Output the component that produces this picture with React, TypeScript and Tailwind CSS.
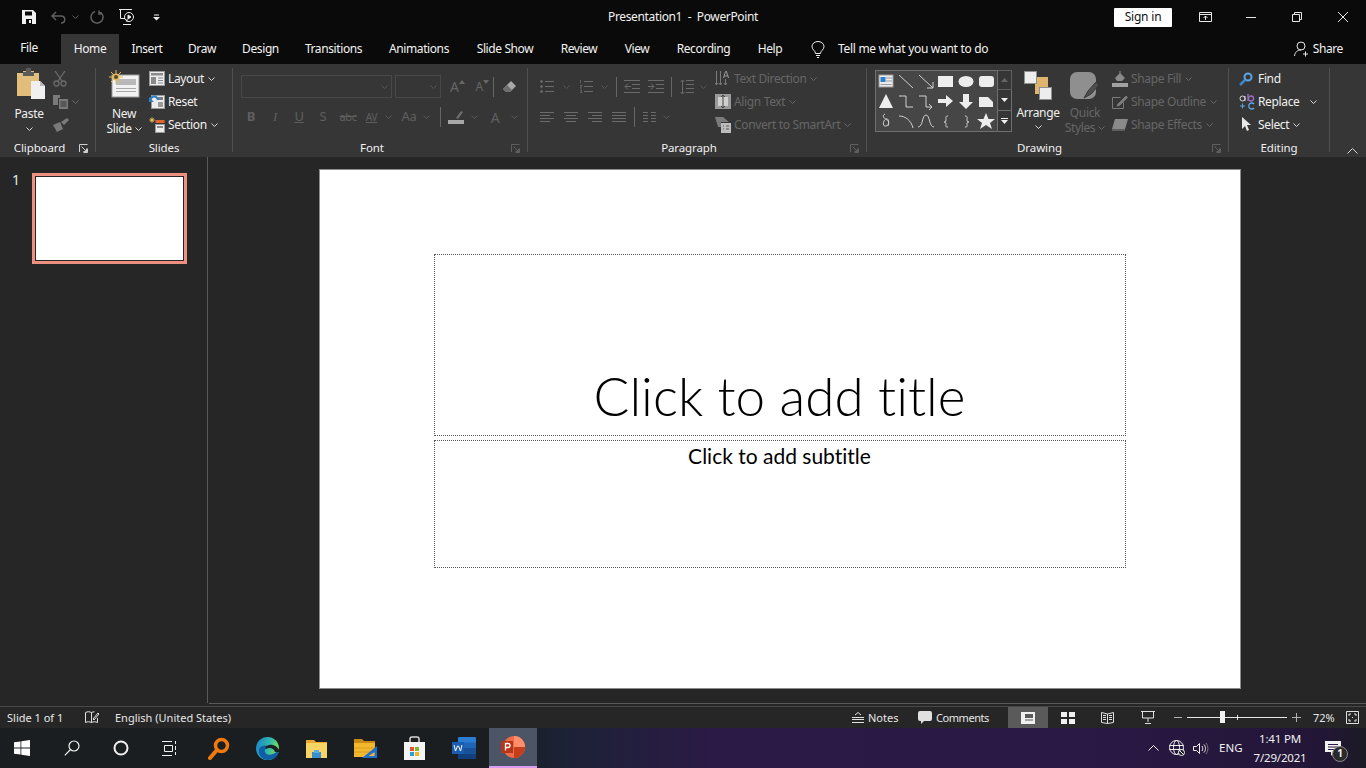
const dim = '#6b6b6b';

function Chev({ c = '#d8d8d8', className = '' }: { c?: string; className?: string }) {
  return (
    <svg width="7" height="4" viewBox="0 0 7 4" className={className} fill="none" stroke={c}>
      <path d="M.5.5 3.5 3.5 6.5.5" />
    </svg>
  );
}

function Launcher({ c = '#bdbdbd' }: { c?: string }) {
  return (
    <svg width="9" height="9" viewBox="0 0 9 9" fill="none" stroke={c}>
      <path d="M.5 8V.5H8.5M8.5 4.5V8.5H4.5M2.5 2.5 7.5 7.5M7.5 4.5V7.5H4.5" />
    </svg>
  );
}

function Label({ text, launcher, c }: { text: string; launcher?: boolean; c?: string }) {
  return (
    <div className="flex h-[16px] items-center">
      <div className="flex-1 text-center text-[11.5px] leading-[16px] tracking-[-0.1px] text-[#f0f0f0]">{text}</div>
      {launcher && (
        <div className="flex w-[16px] items-center justify-start">
          <Launcher c={c} />
        </div>
      )}
    </div>
  );
}

function Group({ className, children }: { className: string; children: React.ReactNode }) {
  return (
    <div className={'flex ' + className}>
      <div className="flex min-w-0 flex-1 flex-col">{children}</div>
      <div className="mt-[1px] h-[84px] w-px bg-[#505050]" />
    </div>
  );
}

function SmallRow({ icon, text, disabled, chev }: { icon: React.ReactNode; text: string; disabled?: boolean; chev?: boolean }) {
  return (
    <div className="flex h-[23px] items-center">
      <div className="flex w-[16px] justify-center">{icon}</div>
      <span className={'ml-[3px] text-[12px] ' + (disabled ? 'text-[#666666]' : 'text-[#f0f0f0]')}>{text}</span>
      {chev && <Chev c={disabled ? '#666666' : '#d8d8d8'} className="ml-[4px]" />}
    </div>
  );
}

function Lines({ w = 14, kind }: { w?: number; kind: 'left' | 'center' | 'right' | 'just' }) {
  const rows = [
    { left: [0, 14], center: [0, 14], right: [0, 14], just: [0, 14] },
    { left: [0, 10], center: [2, 12], right: [4, 14], just: [0, 14] },
    { left: [0, 14], center: [0, 14], right: [0, 14], just: [0, 14] },
    { left: [0, 10], center: [2, 12], right: [4, 14], just: [0, 14] },
  ];
  return (
    <svg width={w} height="12" viewBox="0 0 14 12" stroke={dim}>
      {rows.map((r, i) => (
        <path key={i} d={`M${r[kind][0]} ${1.5 + i * 3}H${r[kind][1]}`} />
      ))}
    </svg>
  );
}

function Clipboard() {
  return (
    <svg width="28" height="31" viewBox="0 0 28 31">
      <path d="M0 5h6V3h11v2h5v23H0z" fill="#e2bd7c" />
      <path d="M6 4h3V0h5v4h3v4H6z" fill="#5a5a5a" />
      <path d="M14 13h9l5 5v13H14z" fill="#f0f0f0" />
      <path d="M23 13v5h5" fill="#bbbbbb" />
    </svg>
  );
}

function NewSlideIcon() {
  return (
    <svg width="31" height="28" viewBox="0 0 31 28">
      <rect x="3" y="5" width="27" height="22" fill="#f2f2f2" stroke="#9c9c9c" />
      <rect x="7" y="9" width="20" height="6" fill="#b9b9b9" />
      <path d="M7 18.5h20M7 21.5h20" stroke="#a8a8a8" />
      <circle cx="7" cy="7" r="3.5" fill="#e4b95b" />
      <path d="M7 0v14M0 7h14M2 2l10 10M12 2 2 12" stroke="#e4b95b" />
      <circle cx="7" cy="7" r="2" fill="#5a4a22" />
    </svg>
  );
}

function LayoutIcon() {
  return (
    <svg width="16" height="15" viewBox="0 0 16 15">
      <rect x=".5" y=".5" width="15" height="14" fill="#ececec" stroke="#9a9a9a" />
      <rect x="2" y="2" width="12" height="2.5" fill="#8a8a8a" />
      <rect x="2" y="6" width="5" height="7" fill="#8a8a8a" />
      <path d="M9 7h5M9 9.5h5M9 12h5" stroke="#8a8a8a" />
    </svg>
  );
}

function ResetIcon() {
  return (
    <svg width="16" height="15" viewBox="0 0 16 15">
      <rect x="2.5" y="1.5" width="13" height="13" fill="#ececec" stroke="#9a9a9a" />
      <rect x="9" y="3" width="5" height="3" fill="#7d7d7d" />
      <rect x="9" y="8" width="5" height="5" fill="#9a9a9a" />
      <path d="M1.5 5.5C3 1.5 8 1.5 9 6" fill="none" stroke="#2f7fc4" strokeWidth="2" />
      <path d="M0 3v5h5z" fill="#2f7fc4" />
    </svg>
  );
}

function SectionIcon() {
  return (
    <svg width="16" height="16" viewBox="0 0 16 16">
      <rect x="6.5" y="3" width="9" height="3" fill="#e2672f" />
      <rect x="6.5" y="7.5" width="9" height="8" fill="#ececec" stroke="#9a9a9a" />
      <rect x="8" y="9" width="6" height="2" fill="#8a8a8a" />
      <circle cx="3" cy="3" r="1.6" fill="#e4b95b" />
      <path d="M3 0v6M0 3h6M1 1l4 4M5 1 1 5" stroke="#e4b95b" strokeWidth=".7" />
    </svg>
  );
}

function Shape({ n }: { n: number }) {
  const s = { fill: 'none', stroke: '#d0d0d0' };
  const f = '#ededed';
  const items: React.ReactNode[] = [
    <g>
      <rect x="3" y="4" width="14" height="12" fill="#ececec" stroke="#9a9a9a" />
      <rect x="4.500" y="6" width="5" height="5" fill="#2f7fd0" />
      <path d="M10 7h6M10 10h6M4.500 13.500h11" stroke="#9a9a9a" />
    </g>,
    <path d="M3 4 17 17" {...s} />,
    <path d="M3 4 17 17M11 17h6v-6" {...s} />,
    <rect x="2" y="5" width="15" height="11" fill={f} />,
    <ellipse cx="9" cy="10.500" rx="7.500" ry="5.500" fill={f} />,
    <rect x="2" y="5" width="15" height="11" rx="3" fill={f} />,
    <path d="M10 3 17 17H3z" fill={f} />,
    <path d="M3 5h7v11h7" {...s} />,
    <path d="M3 5h7v11h5M13 13l3 3-3 3" {...s} />,
    <path d="M2 8h8V4l7 6-7 6v-4H2z" fill={f} />,
    <path d="M6 3h6v8h4l-7 7-7-7h4z" fill={f} />,
    <path d="M2 6h9l5 5v5H2z" fill={f} />,
    <path d="M9 3c-4 2 0 5 2 6s3 5-1 6-3-6 0-7 3 3 2 7" {...s} />,
    <path d="M3 5c6 0 12 4 14 12" {...s} />,
    <path d="M2 16C7 16 6 4 10 4s3 12 8 12" {...s} />,
    <path d="M12 5c-3 0-2 2-2 4s-1 2-2 2c1 0 2 0 2 2s-1 3 2 3" {...s} />,
    <path d="M8 5c3 0 2 2 2 4s1 2 2 2c-1 0-2 0-2 2s1 3-2 3" {...s} />,
    <path d="M9 2l2.500 6H18l-5 4 2 6-6-4-6 4 2-6-5-4h6.500z" fill={f} />,
  ];
  return <svg width="20" height="20" viewBox="0 0 20 20">{items[n]}</svg>;
}

function Ribbon() {
  return (
    <div className="flex h-[93px] bg-[#363636] pt-[3px]">
      <Group className="w-[96px]">
        <div className="flex h-[73px]">
          <div className="ml-[13px] flex w-[32px] flex-col items-center pt-[1px]">
            <div className="ml-[4px]"><Clipboard /></div>
            <span className="mt-[7px] text-[12px] leading-[16px] text-[#f0f0f0]">Paste</span>
            <Chev className="mt-[5px]" />
          </div>
          <div className="ml-[8px] flex flex-col">
            <div className="flex h-[23px] items-center">
              <svg width="14" height="16" viewBox="0 0 14 16" fill="none" stroke={dim} strokeWidth="1.300">
                <path d="M2 0 9 10M12 0 5 10" />
                <circle cx="3.500" cy="12.500" r="2.500" />
                <circle cx="10.500" cy="12.500" r="2.500" />
              </svg>
            </div>
            <div className="flex h-[23px] items-center">
              <svg width="15" height="14" viewBox="0 0 15 14" fill="#7a7a7a">
                <path d="M0 0h7v3H5v7H0z" />
                <path d="M6 4h9v10H6z" />
                <path d="M7.500 7h6M7.500 9h6M7.500 11h6" stroke="#363636" />
              </svg>
              <Chev c={dim} className="ml-[4px]" />
            </div>
            <div className="flex h-[23px] items-center">
              <svg width="16" height="14" viewBox="0 0 16 14" fill="#7a7a7a">
                <path d="M0 7 4 14l6-3-3-7z" />
                <path d="M8 4l3 3 5-5-2-2z" />
              </svg>
            </div>
          </div>
        </div>
        <Label text="Clipboard" launcher c="#d0d0d0" />
      </Group>

      <Group className="w-[137px]">
        <div className="flex h-[73px]">
          <div className="ml-[4px] flex w-[48px] flex-col items-center pt-[3px]">
            <NewSlideIcon />
            <span className="mt-[8px] text-[12px] leading-[15px] text-[#f0f0f0]">New</span>
            <span className="flex items-center text-[12px] leading-[15px] text-[#f0f0f0]">Slide<Chev className="ml-[3px]" /></span>
          </div>
          <div className="ml-[1px] flex flex-col">
            <SmallRow icon={<LayoutIcon />} text="Layout" chev />
            <SmallRow icon={<ResetIcon />} text="Reset" />
            <SmallRow icon={<SectionIcon />} text="Section" chev />
          </div>
        </div>
        <Label text="Slides" />
      </Group>

      <Group className="w-[295px]">
        <div className="flex h-[73px] flex-col pl-[8px] pt-[8px]">
          <div className="flex h-[23px] items-center">
            <div className="flex h-[23px] w-[151px] items-center justify-end border border-[#484848] pr-[3px]"><Chev c="#555555" /></div>
            <div className="ml-[3px] flex h-[23px] w-[46px] items-center justify-end border border-[#484848] pr-[3px]"><Chev c="#555555" /></div>
            <span className="ml-[9px] text-[14px] text-[#666666]">A</span>
            <svg width="6" height="4" viewBox="0 0 6 4" className="mb-[10px]" fill="#666666"><path d="M0 4 3 0l3 4z" /></svg>
            <span className="ml-[11px] text-[12px] text-[#666666]">A</span>
            <svg width="6" height="4" viewBox="0 0 6 4" className="mb-[10px]" fill="#666666"><path d="M0 0h6L3 4z" /></svg>
            <div className="ml-[4px] h-[20px] w-px bg-[#666666]" />
            <svg width="14" height="14" viewBox="0 0 14 14" className="ml-[9px]">
              <path d="M0 9 8 1l5 5-6 6H3z" fill="#a8a8a8" />
              <path d="M0 9l4-4 5 5-2 2H3z" fill="#6f6f6f" />
            </svg>
          </div>
          <div className="mt-[8px] flex h-[22px] items-center text-[#5f5f5f]">
            <span className="ml-[2px] w-[16px] text-center text-[13px] font-bold">B</span>
            <span className="ml-[8px] w-[16px] text-center font-['Liberation_Serif',serif] text-[13px] italic">I</span>
            <span className="ml-[8px] w-[16px] text-center text-[13px] underline">U</span>
            <span className="ml-[8px] w-[16px] text-center text-[13px]">S</span>
            <span className="ml-[8px] w-[18px] text-center text-[11px] line-through">abc</span>
            <span className="ml-[6px] w-[17px] text-center text-[10px] leading-[10px] underline">AV</span>
            <Chev c="#555555" className="ml-[5px]" />
            <span className="ml-[8px] w-[18px] text-center text-[13px]">Aa</span>
            <Chev c="#555555" className="ml-[5px]" />
            <div className="ml-[10px] h-[20px] w-px bg-[#666666]" />
            <svg width="16" height="14" viewBox="0 0 16 14" className="ml-[7px]">
              <path d="M8 8 13 1l2 1-5 7z" fill="#6f6f6f" />
              <rect y="10" width="16" height="4" fill="#a8a8a8" />
            </svg>
            <Chev c="#555555" className="ml-[7px]" />
            <span className="ml-[10px] w-[14px] text-center text-[14px]">A</span>
            <Chev c="#555555" className="ml-[9px]" />
          </div>
        </div>
        <Label text="Font" launcher c="#5f5f5f" />
      </Group>

      <Group className="w-[339px]">
        <div className="flex h-[73px]">
          <div className="flex w-[187px] flex-col pl-[12px] pt-[8px]">
            <div className="flex h-[23px] items-center">
              <svg width="14" height="13" viewBox="0 0 14 13" stroke={dim} fill={dim}>
                <circle cx="1.500" cy="1.500" r="1" /><circle cx="1.500" cy="6.500" r="1" /><circle cx="1.500" cy="11.500" r="1" />
                <path d="M5 1.500h9M5 6.500h9M5 11.500h9" />
              </svg>
              <Chev c="#555555" className="ml-[9px]" />
              <svg width="14" height="13" viewBox="0 0 14 13" stroke={dim} className="ml-[9px]">
                <path d="M5 1.500h9M5 6.500h9M5 11.500h9" />
                <path d="M1.500 0v3.500M1 5.500h2l-2 2.500h2M1 10h2l-1 1 1 1.500H1" fill="none" strokeWidth=".8" />
              </svg>
              <Chev c="#555555" className="ml-[8px]" />
              <div className="ml-[8px] h-[20px] w-px bg-[#666666]" />
              <svg width="16" height="13" viewBox="0 0 16 13" stroke={dim} fill="none" className="ml-[7px]">
                <path d="M0 .5h16M8 4.500h8M8 8.500h8M0 12.500h16M7 6.500H1M4 3.500l-3 3 3 3" />
              </svg>
              <svg width="16" height="13" viewBox="0 0 16 13" stroke={dim} fill="none" className="ml-[8px]">
                <path d="M0 .5h16M8 4.500h8M8 8.500h8M0 12.500h16M0 6.500h6M3 3.500l3 3-3 3" />
              </svg>
              <div className="ml-[7px] h-[20px] w-px bg-[#666666]" />
              <svg width="14" height="16" viewBox="0 0 14 16" stroke={dim} fill="none" className="ml-[8px]">
                <path d="M6 1.500h8M6 5.500h8M6 9.500h8M6 13.500h8M2.500 1v14M.5 3l2-2 2 2M.5 13l2 2 2-2" />
              </svg>
              <Chev c="#555555" className="ml-[6px]" />
            </div>
            <div className="mt-[8px] flex h-[22px] items-center">
              <Lines kind="left" />
              <div className="ml-[10px]"><Lines kind="center" /></div>
              <div className="ml-[10px]"><Lines kind="right" /></div>
              <div className="ml-[10px]"><Lines kind="just" /></div>
              <div className="ml-[8px] h-[20px] w-px bg-[#666666]" />
              <svg width="13" height="12" viewBox="0 0 13 12" stroke={dim} className="ml-[8px]">
                <path d="M0 1.500h5M8 1.500h5M0 4.500h5M8 4.500h5M0 7.500h5M8 7.500h5M0 10.500h5M8 10.500h5" />
              </svg>
              <Chev c="#555555" className="ml-[7px]" />
            </div>
          </div>
          <div className="flex flex-col">
            <SmallRow
              disabled
              chev
              text="Text Direction"
              icon={
                <svg width="16" height="16" viewBox="0 0 16 16" stroke="#7a7a7a" fill="none">
                  <path d="M1.500 0v14M5.500 0v14M0 12l1.500 2L3 12M4 12l1.500 2L7 12M10.500 8v6M9 12l1.500 2 1.500-2" />
                  <path d="M8.500 7 10.500 .5h1L13.500 7M9.500 5h3" stroke="#9a9a9a" />
                </svg>
              }
            />
            <SmallRow
              disabled
              chev
              text="Align Text"
              icon={
                <svg width="16" height="15" viewBox="0 0 16 15">
                  <rect width="16" height="15" fill="#9a9a9a" />
                  <rect x="3" y="3" width="10" height="9" fill="#cfcfcf" />
                  <path d="M8 1v13M6 3l2-2 2 2M6 12l2 2 2-2" stroke="#444444" fill="none" />
                </svg>
              }
            />
            <SmallRow
              disabled
              chev
              text="Convert to SmartArt"
              icon={
                <svg width="16" height="16" viewBox="0 0 16 16">
                  <path d="M0 0h8l6 5H6v5H3z" fill="#7a7a7a" />
                  <rect x="6" y="6" width="10" height="10" fill="#bdbdbd" />
                  <path d="M8 9h1M11 9h3M8 12h1M11 12h3" stroke="#555555" />
                </svg>
              }
            />
          </div>
        </div>
        <Label text="Paragraph" launcher c="#5f5f5f" />
      </Group>

      <Group className="w-[362px]">
        <div className="flex h-[73px]">
          <div className="ml-[8px] mt-[3px] flex h-[62px]">
            <div className="grid h-[62px] w-[123px] grid-cols-6 border border-[#6f6f6f] bg-[#464646]">
              {Array.from({ length: 18 }).map((_, i) => (
                <Shape key={i} n={i} />
              ))}
            </div>
            <div className="flex w-[14px] flex-col">
              <div className="flex h-[20px] items-center justify-center border border-l-0 border-[#5f5f5f]">
                <svg width="7" height="4" viewBox="0 0 7 4" fill="#666666"><path d="M0 4 3.500 0 7 4z" /></svg>
              </div>
              <div className="flex h-[21px] items-center justify-center border border-l-0 border-t-0 border-[#6f6f6f]">
                <svg width="7" height="4" viewBox="0 0 7 4" fill="#f0f0f0"><path d="M0 0h7L3.500 4z" /></svg>
              </div>
              <div className="flex h-[21px] flex-col items-center justify-center gap-[1px] border border-l-0 border-t-0 border-[#6f6f6f]">
                <div className="h-px w-[7px] bg-[#f0f0f0]" />
                <svg width="7" height="4" viewBox="0 0 7 4" fill="#f0f0f0"><path d="M0 0h7L3.500 4z" /></svg>
              </div>
            </div>
          </div>
          <div className="ml-[4px] flex w-[44px] flex-col items-center pt-[4px]">
            <svg width="28" height="29" viewBox="0 0 28 29">
              <rect x="11" y="6" width="13" height="17" fill="#dfb56e" />
              <rect x=".5" y=".5" width="12" height="12" fill="#ededed" stroke="#8f8f8f" />
              <rect x="15.500" y="16.500" width="12" height="12" fill="#ededed" stroke="#8f8f8f" />
            </svg>
            <span className="mt-[5px] text-[12px] leading-[15px] text-[#f0f0f0]">Arrange</span>
            <Chev className="mt-[5px]" />
          </div>
          <div className="ml-[3px] flex w-[44px] flex-col items-center pt-[5px]">
            <svg width="30" height="30" viewBox="0 0 30 30">
              <rect x="0" y="0" width="26" height="27" rx="7" fill="#8f8f8f" />
              <path d="M14 26l4-7 8-9 3 3-8 9z" fill="#4e4e4e" stroke="#363636" />
            </svg>
            <span className="mt-[3px] text-[12px] leading-[15px] text-[#666666]">Quick</span>
            <span className="flex items-center text-[12px] leading-[15px] text-[#666666]">Styles<Chev c="#666666" className="ml-[3px]" /></span>
          </div>
          <div className="ml-[5px] flex flex-col">
            <SmallRow
              disabled
              chev
              text="Shape Fill"
              icon={
                <svg width="16" height="16" viewBox="0 0 16 16">
                  <path d="M3 7 8 2l5 5-3 3H5z" fill="#8a8a8a" />
                  <path d="M8 0v4" stroke="#8a8a8a" />
                  <rect y="12" width="16" height="4" fill="#a0a0a0" />
                </svg>
              }
            />
            <SmallRow
              disabled
              chev
              text="Shape Outline"
              icon={
                <svg width="16" height="15" viewBox="0 0 16 15" fill="none" stroke="#7a7a7a">
                  <path d="M.5 3.500h8M.5 3.500v11h11v-6" />
                  <path d="M6 10 14 2l1.500 1.500-8 8-2.500.5z" fill="#7a7a7a" />
                </svg>
              }
            />
            <SmallRow
              disabled
              chev
              text="Shape Effects"
              icon={
                <svg width="16" height="13" viewBox="0 0 16 13">
                  <path d="M3 1h13l-3 10H0z" fill="#8a8a8a" />
                  <path d="M0 11h13v2H0z" fill="#5e5e5e" />
                </svg>
              }
            />
          </div>
        </div>
        <Label text="Drawing" launcher c="#5f5f5f" />
      </Group>

      <Group className="w-[101px]">
        <div className="flex h-[73px] flex-col pl-[10px]">
          <div className="flex h-[23px] items-center">
            <svg width="14" height="14" viewBox="0 0 14 14" fill="none">
              <circle cx="9" cy="5" r="3.500" stroke="#5aa5e6" strokeWidth="2" />
              <path d="M6 8 1 13" stroke="#3f86c8" strokeWidth="2.500" />
            </svg>
            <span className="ml-[5px] text-[12px] text-[#f0f0f0]">Find</span>
          </div>
          <div className="flex h-[23px] items-center">
            <svg width="16" height="16" viewBox="0 0 16 16" fill="none">
              <circle cx="3.500" cy="4.500" r="2.500" stroke="#dcdcdc" />
              <path d="M6 2v5" stroke="#dcdcdc" />
              <path d="M9 0v7" stroke="#9c6fc6" strokeWidth="1.300" />
              <circle cx="12" cy="4.500" r="2.500" stroke="#9c6fc6" strokeWidth="1.300" />
              <path d="M15 10a3 3 0 1 0 0 4" stroke="#5aa5e6" strokeWidth="1.300" />
              <path d="M1 12h5M3.500 9.500v5" stroke="#5aa5e6" />
            </svg>
            <span className="ml-[3px] text-[12px] text-[#f0f0f0]">Replace</span>
            <Chev className="ml-[10px]" />
          </div>
          <div className="flex h-[23px] items-center">
            <svg width="14" height="15" viewBox="0 0 14 15" className="ml-[2px]">
              <path d="M1 0v12l3-3 2 5 2-1-2-5h4z" fill="#e8e8e8" />
            </svg>
            <span className="ml-[3px] text-[12px] text-[#f0f0f0]">Select</span>
            <Chev className="ml-[4px]" />
          </div>
        </div>
        <Label text="Editing" />
      </Group>

      <div className="flex flex-1 items-end justify-center pb-[3px] pl-[8px]">
        <svg width="11" height="6" viewBox="0 0 11 6" fill="none" stroke="#d8d8d8"><path d="M.5 5.500l5-5 5 5" /></svg>
      </div>
    </div>
  );
}

const tabs = [
  { t: 'File', w: 'w-[61px] pb-[2px] pr-[3px]' },
  { t: 'Home', w: 'w-[58px] bg-[#363636]' },
  { t: 'Insert', w: 'w-[56px]' },
  { t: 'Draw', w: 'w-[54px]' },
  { t: 'Design', w: 'w-[63px]' },
  { t: 'Transitions', w: 'w-[83px]' },
  { t: 'Animations', w: 'w-[88px]' },
  { t: 'Slide Show', w: 'w-[84px]' },
  { t: 'Review', w: 'w-[64px]' },
  { t: 'View', w: 'w-[52px]' },
  { t: 'Recording', w: 'w-[81px]' },
  { t: 'Help', w: 'w-[52px]' },
];

function Tabs() {
  return (
    <div className="flex h-[30px] items-stretch text-[12px] tracking-[-0.4px] text-[#f2f2f2]">
      {tabs.map((x) => (
        <div key={x.t} className={'flex items-center justify-center whitespace-nowrap ' + x.w}>{x.t}</div>
      ))}
      <div className="ml-[15px] flex items-center">
        <svg width="14" height="17" viewBox="0 0 14 17" fill="none" stroke="#f0f0f0">
          <path d="M4.500 12.500c0-3-3.500-3.500-3.500-7a6 5 0 0 1 12 0c0 3.500-3.500 4-3.500 7zM5 14.500h4M6 16.500h2" />
        </svg>
        <span className="ml-[13px] tracking-[-0.3px] text-[#f2f2f2]">Tell me what you want to do</span>
      </div>
      <div className="ml-auto flex items-center pr-[23px]">
        <svg width="15" height="16" viewBox="0 0 15 16" fill="none" stroke="#e8e8e8">
          <circle cx="7" cy="5" r="4" />
          <path d="M.5 15c.5-4 3-6 6.500-6M11.500 10.500v5M9 13h5" />
        </svg>
        <span className="ml-[4px]">Share</span>
      </div>
    </div>
  );
}

function TitleBar() {
  return (
    <div className="grid h-[34px] grid-cols-[1fr_auto_1fr] items-center">
      <div className="flex items-center pl-[22px]">
        <svg width="14" height="14" viewBox="0 0 14 14">
          <path d="M0 0h11l3 3v11H0z" fill="#f2f2f2" />
          <path d="M3 1.500h7v4H3zM4 9h6v5H4z" fill="#0a0a0a" />
          <rect x="7" y="10" width="2" height="3" fill="#f2f2f2" />
        </svg>
        <svg width="15" height="13" viewBox="0 0 15 13" fill="none" stroke="#5f5f5f" strokeWidth="1.500" className="ml-[15px]">
          <path d="M5 1 1 5l4 4M1 5h9c5 0 5 7 0 7" />
        </svg>
        <Chev c="#5f5f5f" className="ml-[6px]" />
        <svg width="14" height="14" viewBox="0 0 14 14" fill="none" stroke="#5f5f5f" strokeWidth="1.500" className="ml-[11px]">
          <path d="M9 1.500a6 6 0 1 1-4 0M9 .5v3.500h3" />
        </svg>
        <svg width="16" height="16" viewBox="0 0 16 16" fill="none" stroke="#ededed" className="ml-[15px]">
          <path d="M0 .5h13M1.500 .5v9H6M4 15.500h8M8 10v3" />
          <circle cx="10" cy="8" r="4.500" />
          <path d="M9 6v4l3-2z" fill="#ededed" />
        </svg>
        <svg width="7" height="7" viewBox="0 0 7 7" fill="#ededed" className="ml-[18px]">
          <path d="M1 .5h5V1.500H1zM0 3h7L3.500 6.500z" />
        </svg>
      </div>
      <div className="text-[12px] tracking-[-0.35px] whitespace-pre text-[#f2f2f2]">Presentation1  -  PowerPoint</div>
      <div className="flex items-center justify-end">
        <div className="flex h-[19px] w-[58px] items-center justify-center rounded-[1px] bg-white text-[12px] tracking-[-0.2px] text-[#111111]">Sign in</div>
        <svg width="13" height="10" viewBox="0 0 13 10" fill="none" stroke="#e8e8e8" className="ml-[27px]">
          <path d="M.5.500h12v9H.5zM.5 2.500h12M6.500 8V4M4.500 6l2-2 2 2" />
        </svg>
        <svg width="10" height="1" viewBox="0 0 10 1" className="ml-[34px]"><rect width="10" height="1" fill="#e8e8e8" /></svg>
        <svg width="10" height="10" viewBox="0 0 10 10" fill="none" stroke="#e8e8e8" className="ml-[36px]">
          <path d="M.5 2.500h7v7h-7zM2.500 2.500v-2h7v7h-2" />
        </svg>
        <svg width="10" height="10" viewBox="0 0 10 10" fill="none" stroke="#e8e8e8" className="ml-[36px] mr-[18px]">
          <path d="M0 0 10 10M10 0 0 10" />
        </svg>
      </div>
    </div>
  );
}

function Main() {
  return (
    <div className="flex h-[546px] bg-[#262626]">
      <div className="flex h-full w-[208px] border-r border-[#5a5a5a] pl-[12px] pt-[15px]">
        <span className="w-[20px] text-[14px] leading-[16px] text-[#e8e8e8]">1</span>
        <div className="mt-px h-[91px] w-[155px] border-[3px] border-[#ee9080] bg-white outline outline-1 outline-offset-[-4px] outline-[#262626]" />
      </div>
      <div className="flex-1 pl-[111px] pt-[12px]">
        <div className="flex h-[520px] w-[922px] flex-col items-center gap-[4px] border border-[#8c8c8c] bg-white pr-[1px] pt-[84px] font-['Lato',sans-serif] tracking-normal text-black [font-variant-ligatures:none]">
          <div className="flex h-[182px] w-[692px] items-end justify-center border border-dotted border-[#555555] pb-[9px] text-[53px] leading-[60px] font-light">
            Click to add title
          </div>
          <div className="flex h-[128px] w-[692px] justify-center border border-dotted border-[#555555] text-[21px] leading-[30px]">
            Click to add subtitle
          </div>
        </div>
      </div>
    </div>
  );
}

function StatusBar() {
  return (
    <div className="flex h-[25px] flex-col bg-[#262626] text-[11px] tracking-normal text-[#e6e6e6]">
      <div className="ml-[209px] h-px bg-[#5a5a5a]" />
      <div className="mt-[2px] h-px bg-[#484848]" />
      <div className="flex h-[21px] items-center">
        <span className="ml-[7px] w-[78px] pt-px">Slide 1 of 1</span>
        <svg width="14" height="14" viewBox="0 0 14 14" fill="none" stroke="#e0e0e0">
          <path d="M.5 1.500c2-1 4-1 6 0v10c-2-1-4-1-6 0zM6.500 1.500c1-.5 2-.7 3-.7M6.500 11.500c2-1 4-1 6 0V7M8 8l5-6 1 1-5 6z" />
        </svg>
        <span className="ml-[16px] pt-px">English (United States)</span>
        <div className="ml-auto flex h-full items-center">
          <svg width="12" height="11" viewBox="0 0 12 11" fill="none" stroke="#e0e0e0">
            <path d="M0 5.500h12M0 7.500h12M0 10.500h12M3 3l3-2.500L9 3" />
          </svg>
          <span className="ml-[4px] w-[50px] pt-px">Notes</span>
          <svg width="14" height="13" viewBox="0 0 14 13" fill="#e0e0e0">
            <path d="M2 0h10a2 2 0 0 1 2 2v6a2 2 0 0 1-2 2H6l-3 3v-3H2a2 2 0 0 1-2-2V2a2 2 0 0 1 2-2z" />
          </svg>
          <span className="ml-[4px] w-[72px] pt-px tracking-[-0.45px]">Comments</span>
          <div className="flex h-full w-[40px] items-center justify-center bg-[#5a5a5a]">
            <svg width="14" height="12" viewBox="0 0 14 12">
              <rect width="14" height="12" fill="#f0f0f0" />
              <rect x="4" y="2" width="8" height="4" fill="#5a5a5a" />
              <rect x="4" y="7.500" width="8" height="1" fill="#5a5a5a" />
            </svg>
          </div>
          <svg width="14" height="12" viewBox="0 0 14 12" fill="#f0f0f0" className="ml-[13px]">
            <path d="M0 0h6v5H0zM8 0h6v5H8zM0 7h6v5H0zM8 7h6v5H8z" />
          </svg>
          <svg width="13" height="12" viewBox="0 0 13 12" fill="none" stroke="#e0e0e0" className="ml-[26px]">
            <path d="M.5.500l6 1.500 6-1.500v10l-6 1-6-1zM6.500 2v9.500M2 3.500h3M2 5.500h3M2 7.500h3M8 3.500h3M8 5.500h3M8 7.500h3" />
          </svg>
          <svg width="14" height="13" viewBox="0 0 14 13" fill="none" stroke="#e0e0e0" className="ml-[27px]">
            <path d="M0 .5h14M1.500 1v6h11V1M7 7v4M4 12.500h6" />
          </svg>
          <svg width="8" height="1" viewBox="0 0 8 1" className="ml-[19px]"><rect width="8" height="1" fill="#b0b0b0" /></svg>
          <div className="relative ml-[5px] h-px w-[100px] bg-[#e6e6e6]">
            <div className="absolute left-[33px] top-[-6px] h-[12px] w-[5px] bg-[#f0f0f0]" />
            <div className="absolute left-[50px] top-[-2px] h-[5px] w-px bg-[#e6e6e6]" />
          </div>
          <svg width="9" height="9" viewBox="0 0 9 9" stroke="#b0b0b0" className="ml-[5px]"><path d="M0 4.500h9M4.500 0v9" /></svg>
          <span className="ml-[12px] w-[24px] pt-px">72%</span>
          <svg width="13" height="13" viewBox="0 0 13 13" fill="none" stroke="#e0e0e0" className="ml-[9px] mr-[7px]">
            <path d="M.5.500h12v12H.5zM3 5V3h2M8 3h2v2M3 8v2h2M8 10h2V8M6.500 6v1M6 6.500h1" />
          </svg>
        </div>
      </div>
    </div>
  );
}

function TaskSlot({ children }: { children: React.ReactNode }) {
  return <div className="flex h-full w-[49px] items-center justify-center">{children}</div>;
}

function Taskbar() {
  return (
    <div className="flex h-[40px] items-center bg-[linear-gradient(90deg,#1a1e20_0%,#1a1e20_37%,#1c2236_41%,#2a1a45_52%,#2a1845_80%,#221636_97%,#1c1a24_100%)] tracking-normal text-[#f0f0f0]">
      <div className="flex h-full w-[47px] items-center justify-center pr-[3px]">
        <svg width="16" height="16" viewBox="0 0 16 16" fill="#ffffff">
          <path d="M0 2.300 6.500 1.400v6.200H0zM7.300 1.300 16 0v7.600H7.300zM0 8.400h6.500v6.200L0 13.700zM7.300 8.400H16V16l-8.700-1.300z" />
        </svg>
      </div>
      <TaskSlot>
        <svg width="16" height="16" viewBox="0 0 16 16" fill="none" stroke="#f0f0f0" strokeWidth="1.200">
          <circle cx="10" cy="6" r="5" />
          <path d="M6.500 9.500 .8 15.300" />
        </svg>
      </TaskSlot>
      <TaskSlot>
        <svg width="16" height="16" viewBox="0 0 16 16" fill="none" stroke="#f0f0f0" strokeWidth="2"><circle cx="8" cy="8" r="6.500" /></svg>
      </TaskSlot>
      <TaskSlot>
        <svg width="16" height="15" viewBox="0 0 16 15" fill="none" stroke="#f0f0f0">
          <path d="M0 .5h10M2.500 4.500h8v6h-8zM0 14.500h10M13.500 0v3M13.500 5v4M13.500 11v3" />
        </svg>
      </TaskSlot>
      <TaskSlot>
        <svg width="22" height="23" viewBox="0 0 22 23" fill="none" stroke="#f07a10">
          <circle cx="13.500" cy="8.500" r="6" strokeWidth="3.500" />
          <path d="M8.500 13.500 2 21" strokeWidth="4" strokeLinecap="round" />
        </svg>
      </TaskSlot>
      <TaskSlot>
        <svg width="23" height="23" viewBox="0 0 23 23">
          <defs>
            <linearGradient id="edgeA" x1="0" y1="0" x2="1" y2="0.300">
              <stop offset="0" stopColor="#1a7fc9" />
              <stop offset="0.600" stopColor="#2fb7b0" />
              <stop offset="1" stopColor="#6fdc5a" />
            </linearGradient>
          </defs>
          <circle cx="11.500" cy="11.500" r="11.500" fill="url(#edgeA)" />
          <path d="M23 13c0 5-4 10-11 10C5 23 2 17 3 12c2-4 8-5 11-1-3-1-6 1-5 4s6 5 14-2z" fill="#0f5fa8" />
          <path d="M10 12c3-2 8-1 9 3h4v-2c-1-3-6-6-10-5s-4 2-3 4z" fill="#1c2024" />
        </svg>
      </TaskSlot>
      <TaskSlot>
        <svg width="21" height="19" viewBox="0 0 21 19">
          <path d="M0 1h8l2 2h11v16H0z" fill="#e8a92c" />
          <rect x="0" y="4" width="21" height="15" fill="#f6d565" />
          <rect x="6" y="13" width="9" height="6" fill="#3a8ed0" />
          <rect x="8" y="11" width="5" height="3" fill="#5aaee6" />
        </svg>
      </TaskSlot>
      <TaskSlot>
        <svg width="23" height="21" viewBox="0 0 23 21">
          <path d="M0 1h8l2 2h11v16H0z" fill="#c98a14" />
          <rect x="0" y="5" width="21" height="14" fill="#f2b92e" />
          <path d="M0 10h21M0 14h21" stroke="#dd9c1e" />
          <path d="M23 8v12H8z" fill="#1f6fd0" />
          <path d="M20.500 14v4h-6z" fill="#f2b92e" />
        </svg>
      </TaskSlot>
      <TaskSlot>
        <svg width="21" height="24" viewBox="0 0 21 24">
          <path d="M6 7V3a2 2 0 0 1 2-2h5a2 2 0 0 1 2 2v4" fill="none" stroke="#d8d8d8" strokeWidth="1.500" />
          <rect y="6" width="21" height="18" fill="#f4f4f4" />
          <path d="M6 11h4v4H6z" fill="#e8532b" />
          <path d="M11 11h4v4h-4z" fill="#7fba2b" />
          <path d="M6 16h4v4H6z" fill="#2a9fe0" />
          <path d="M11 16h4v4h-4z" fill="#f7b51c" />
        </svg>
      </TaskSlot>
      <TaskSlot>
        <svg width="24" height="22" viewBox="0 0 24 22">
          <rect x="6" y="0" width="18" height="22" rx="1" fill="#2b7cd3" />
          <rect x="6" y="5.500" width="18" height="5.500" fill="#1f66b8" />
          <rect x="6" y="11" width="18" height="5.500" fill="#18509a" />
          <rect x="6" y="16.500" width="18" height="5.500" fill="#113f7c" />
          <rect x="0" y="5" width="12" height="12" fill="#1a5cb0" />
          <path d="M2 8l1.500 6L5.500 9h1l2 5L10 8" fill="none" stroke="#ffffff" />
        </svg>
      </TaskSlot>
      <div className="ml-px flex h-full w-[48px] flex-col bg-[#4b5565]">
        <div className="flex flex-1 items-center justify-center">
          <svg width="24" height="22" viewBox="0 0 24 22">
            <circle cx="13" cy="11" r="11" fill="#ed6c47" />
            <path d="M13 0a11 11 0 0 1 11 11H13z" fill="#ff8f6b" />
            <path d="M13 11h11a11 11 0 0 1-11 11z" fill="#c43e1c" />
            <rect x="0" y="5" width="12" height="12" fill="#b7361a" />
            <path d="M4.500 14.500V7.500H7a2 2 0 0 1 0 4H4.500" fill="none" stroke="#ffffff" strokeWidth="1.300" />
          </svg>
        </div>
        <div className="h-[2px] bg-[#d99bf0]" />
      </div>
      <div className="ml-auto flex h-full items-center text-[12px]">
        <svg width="11" height="6" viewBox="0 0 11 6" fill="none" stroke="#f0f0f0"><path d="M.5 5.500l5-5 5 5" /></svg>
        <svg width="16" height="16" viewBox="0 0 16 16" fill="none" stroke="#f0f0f0" className="ml-[10px]">
          <circle cx="7.500" cy="7.500" r="7" />
          <ellipse cx="7.500" cy="7.500" rx="3" ry="7" />
          <path d="M.5 5.500h14M.5 9.500h14" />
          <circle cx="12.500" cy="12.500" r="3" fill="#1c1a24" />
          <path d="M10.500 10.500l4 4" />
        </svg>
        <svg width="16" height="13" viewBox="0 0 16 13" fill="none" stroke="#f0f0f0" className="ml-[8px]">
          <path d="M.5 4.500h3l3-3v10l-3-3h-3zM9 4c1 1.500 1 3.500 0 5M11 2.500c2 2.500 2 5.500 0 8" />
          <path d="M13 1c2.500 3 2.500 8 0 11" stroke="#777777" />
        </svg>
        <span className="ml-[10px] w-[24px] text-[11.5px]">ENG</span>
        <div className="ml-[5px] flex w-[64px] flex-col items-center text-[11.5px] leading-[19px] tracking-[-0.2px]">
          <span>1:41 PM</span>
          <span>7/29/2021</span>
        </div>
        <div className="relative ml-[13px] mr-[25px]">
          <svg width="16" height="15" viewBox="0 0 16 15" fill="#f2f2f2">
            <path d="M0 0h16v11H9l-3 4v-4H0z" />
            <path d="M3 3.500h10M3 6h10M3 8.500h6" stroke="#2a1845" />
          </svg>
          <div className="absolute left-[7px] top-[5px] flex h-[16px] w-[16px] items-center justify-center rounded-full border border-[#8a8a8a] bg-[#2a2a2a] text-[10px] font-bold text-[#f0f0f0]">1</div>
        </div>
      </div>
    </div>
  );
}

export default function App() {
  return (
    <div className="flex h-[768px] w-[1366px] flex-col overflow-hidden bg-[#0a0a0a] font-['Noto_Sans',sans-serif] tracking-[-0.35px]">
      <TitleBar />
      <Tabs />
      <Ribbon />
      <Main />
      <StatusBar />
      <Taskbar />
    </div>
  );
}
